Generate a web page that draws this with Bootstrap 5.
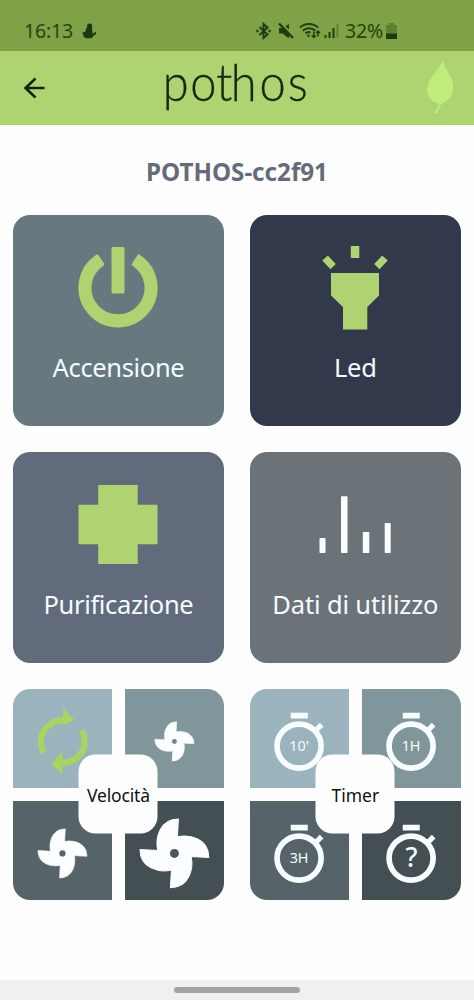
<!DOCTYPE html>
<html lang="it">
<head>
<meta charset="utf-8">
<meta name="viewport" content="width=device-width, initial-scale=1">
<title>Pothos</title>
<link href="https://cdn.jsdelivr.net/npm/bootstrap@5.3.0/dist/css/bootstrap.min.css" rel="stylesheet">
<style>
body{background:#fefefe;font-family:"Noto Sans",sans-serif;height:1000px;overflow:hidden}
svg{display:block}
.statusbar{height:51px;background:#7ea245;color:#24450f;padding:11px 77px 0 24px;font-size:19.5px;line-height:40px}
.statusbar svg{overflow:visible}
.clock{letter-spacing:-.2px;font-weight:400}
.appbar{height:74px;background:#aed472;padding:0 20px 0 20px}
.device{font-size:24.2px;font-weight:700;color:#646b7a;line-height:34px;margin-top:30px;margin-bottom:26.3px}
.tiles{display:grid;grid-template-columns:210.7px 210.7px;grid-auto-rows:210.7px;gap:26.2px;padding-left:13.1px}
.tile{border:0;border-radius:17px;color:#f5fbff;padding:31px 0 0;font-size:25.5px;line-height:34px;letter-spacing:-.35px}
.tile svg{margin-bottom:21.500px}
.t-power{background:#67787f}.t-led{background:#32394b}.t-pure{background:#616b7c}.t-data{background:#6b7379}
.quad{display:grid;grid-template-columns:1fr 1fr;grid-template-rows:1fr 1fr;gap:13px;border-radius:17px;overflow:hidden;background:#fefefe}
.quad svg{width:100%;height:100%}
.q1{background:#9ab3bc}.q2{background:#80969b}.q3{background:#56646a}.q4{background:#434f52}
.hub{width:79px;height:79px;border-radius:17px;background:#fefefe;color:#101214;font-size:17.5px}
.homebar{height:20px;background:#f2eff2}
.homebar span{width:126px;height:5.5px;background:#a5a3a6;border-radius:3px}
</style>
</head>
<body class="d-flex flex-column">
<div class="statusbar d-flex justify-content-between flex-shrink-0">
  <div class="d-flex align-items-center">
    <span class="clock">16:13</span>
    <svg style="margin-left:9px" width="15" height="16" viewBox="0 0 15 16" fill="#183a10"><circle cx="7.6" cy="3" r="2.6"/><path d="M6 4.500C2.500 5 4.500 8 3 9C0 9 0 11 1.500 12C1 14.500 4 15.500 7 15.300C10 15.500 11.500 14 11.300 12.800C14 12 15 10 13.700 8.500L11.500 10.500C9.500 10 11 6 9.500 4.500Z"/></svg>
  </div>
  <div class="d-flex align-items-center">
    <svg width="84" height="18" viewBox="0 0 84 18" fill="none" stroke="#1d3e10" stroke-width="2">
      <path d="M3.500 5l8 7.500-4 3.500V2l4 3.500-8 7.500"/><path d="M.3 9h2.200M12.500 9h2.200" stroke-width="2.400"/>
      <path d="M23 6h3.500l6.500-4v14.500l-6.500-5H23z" fill="#1d3e10" stroke="none"/><path d="M24.500 .5L39 15" stroke="#7ea245" stroke-width="2"/><path d="M23 1.500L37 16" stroke-width="2.400"/>
      <path d="M44 5.500c5-4.700 13-4.700 18 0M46.800 8.700c3.500-3.200 9-3.200 12.500 0M49.500 11.500c2-1.700 4-1.500 5-.8"/><circle cx="52.500" cy="13.800" r="1.200" fill="#1d3e10" stroke="none"/>
      <path d="M57.800 9.500v6m-2-2l2 2 2-2M62 14.500V9m-2 2l2-2 2 2" stroke-width="1.500"/>
      <path d="M69.500 16v-3M73.500 16v-6M77.500 16V6"/><path d="M81.500 16V2" stroke="#5d8333"/>
    </svg>
    <span class="clock" style="margin-left:5px">32%</span>
    <svg style="margin-left:3px" width="11" height="16" viewBox="0 0 11 16"><path d="M3 0h5v2h3v9H0V2h3z" fill="#5b8132"/><path d="M0 10.500h11V16H0z" fill="#1b3b0e"/></svg>
  </div>
</div>
<header class="appbar d-flex align-items-center justify-content-between flex-shrink-0">
  <svg width="28" height="28" viewBox="0 0 28 28" fill="none" stroke="#10240b" stroke-width="2.500"><path d="M24.500 14H6M15.500 4.500L5.500 14l10 9.500"/></svg>
  <svg width="160" height="74" viewBox="0 0 160 74" overflow="visible"><text transform="translate(0 50) scale(.94 1.040)" x="6 35.500 63 78.500 109 139" y="0" font-family="Lato,sans-serif" font-weight="300" font-size="50" fill="#122a0d" stroke="#122a0d" stroke-width=".3">pothos</text></svg>
  <svg width="28" height="56" viewBox="1.500 0 28 56" fill="#bfed7b"><path d="M18.500 1C20 9 29 16 28.700 27C28.500 35 24 41.500 16.800 43.800C15.500 47 14 51 11.500 54L9.500 52.500C12 49 14 46 14.500 43.500C7 42.500 3 37 2.300 29.500C4 18 13 11 18.500 1Z"/></svg>
</header>
<h1 class="device text-center">POTHOS-cc2f91</h1>
<main class="tiles flex-shrink-0">
  <button class="tile t-power d-flex flex-column align-items-center">
    <svg width="80" height="82" viewBox="0 0 80 82" fill="#aed370" stroke="#aed370" stroke-width="3" stroke-linejoin="round"><path d="M19.200 9.900A38.100 38.100 0 1 0 60.800 9.900L55.300 18.400A28 28 0 1 1 24.700 18.400Z"/><rect x="35" y="2.500" width="10" height="43.500"/></svg>
    <span>Accensione</span>
  </button>
  <button class="tile t-led d-flex flex-column align-items-center">
    <svg width="80" height="82" viewBox="0 0 80 82" fill="#aed370" overflow="visible"><path d="M35.800 0h8.500v12h-8.500zM16 27h48v22.500L52.300 61v22.500H28V61L16 49.500zM7.300 14.500l5.500-5 8 8.500-5.300 5.300zM72.700 14.500l-5.500-5-8 8.500 5.300 5.300z"/></svg>
    <span>Led</span>
  </button>
  <button class="tile t-pure d-flex flex-column align-items-center">
    <svg width="80" height="82" viewBox="0 0 80 82" fill="#aed370"><path d="M20.200 2h39.500v19.800h19.800v39.400H59.700V81H20.200V61.200H.5V21.800h19.700z"/></svg>
    <span>Purificazione</span>
  </button>
  <button class="tile t-data d-flex flex-column align-items-center">
    <svg width="80" height="82" viewBox="0 0 80 82" fill="#fafeff"><rect x="4.500" y="55" width="6" height="15" rx=".7"/><rect x="26" y="13.300" width="6.500" height="56.700" rx=".7"/><rect x="47.800" y="49" width="6.500" height="21" rx=".7"/><rect x="69.700" y="40" width="6" height="30" rx=".7"/></svg>
    <span style="letter-spacing:-.15px">Dati di utilizzo</span>
  </button>
  <section class="quad position-relative">
    <svg class="q1" viewBox="0 0 296 296"><g fill="none" stroke="#a9d463" stroke-width="19"><path d="M91 191C70 145 95 95 152 93"/><path d="M207 124C228 170 203 220 146 222"/></g><path d="M150 57l34 35-34 17zM148 188v69l-34-34z" fill="#a9d463"/></svg>
    <svg class="q2" viewBox="0 0 296 296"><g transform="translate(148 157) scale(.57)"><path id="blades" d="M12-103L9-50C45-58 103-45 103 12L50 9C58 45 45 103-12 103L-9 50C-45 58-103 45-103-12L-50-9C-58-45-45-103 12-103Z" fill="#fcfeff" stroke="#fcfeff" stroke-width="3" stroke-linejoin="round"/><circle r="13" fill="#70868b"/></g></svg>
    <svg class="q3" viewBox="0 0 296 296"><g transform="translate(148 157) scale(.71)"><use href="#blades"/><circle r="13" fill="#56646a"/></g></svg>
    <svg class="q4" viewBox="0 0 296 296"><g transform="translate(148 157)"><use href="#blades"/><circle r="13.500" fill="#4b575b"/></g></svg>
    <div class="hub position-absolute top-50 start-50 translate-middle d-flex align-items-center justify-content-center" style="letter-spacing:-.15px">Velocità</div>
  </section>
  <section class="quad position-relative">
    <svg class="q1" viewBox="0 0 296 296" fill="#f8fdff" font-size="43" text-anchor="middle"><g id="watch"><circle cx="147" cy="171" r="66" fill="none" stroke="#f8fdff" stroke-width="17"/><path d="M122 71h51v17h-51zM192 118l17-17 11 11-17 17z"/></g><text x="147" y="186">10'</text></svg>
    <svg class="q2" viewBox="0 0 296 296" fill="#f8fdff" font-size="43" text-anchor="middle"><use href="#watch"/><text x="147" y="186">1H</text></svg>
    <svg class="q3" viewBox="0 0 296 296" fill="#f8fdff" font-size="43" text-anchor="middle"><use href="#watch"/><text x="147" y="186">3H</text></svg>
    <svg class="q4" viewBox="0 0 296 296" fill="#f8fdff" font-size="80" font-weight="500" text-anchor="middle"><use href="#watch"/><text x="148" y="198">?</text></svg>
    <div class="hub position-absolute top-50 start-50 translate-middle d-flex align-items-center justify-content-center">Timer</div>
  </section>
</main>
<footer class="homebar d-flex align-items-center justify-content-center mt-auto flex-shrink-0"><span></span></footer>
<script src="https://cdn.jsdelivr.net/npm/bootstrap@5.3.0/dist/js/bootstrap.bundle.min.js"></script>
</body>
</html>
